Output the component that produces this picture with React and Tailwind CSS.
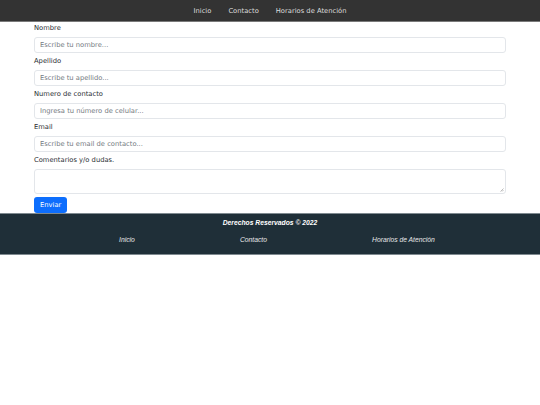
const navLinks = ['Inicio', 'Contacto', 'Horarios de Atención'];

const fields = [
  ['Nombre', 'Escribe tu nombre...'],
  ['Apellido', 'Escribe tu apellido...'],
  ['Numero de contacto', 'Ingresa tu número de celular...'],
  ['Email', 'Escribe tu email de contacto...'],
];

function App() {
  return (
    <div className="min-h-[405px] bg-white font-['DejaVu_Sans',sans-serif] text-[6.75px] text-[#2a2e33]">
      <nav className="flex h-[22px] items-center justify-center gap-[17px] border-b border-[#7a7a7a] bg-[#333333] pt-[2px]">
        {navLinks.map((link) => (
          <a key={link} className="leading-none text-[#dddddd]">{link}</a>
        ))}
      </nav>

      <form className="px-[34px]">
        {fields.map(([label, placeholder]) => (
          <div key={label} className="mb-[2px]">
            <label className="mb-[4px] block h-[11px] pt-[1px] leading-[11px]">{label}</label>
            <input
              className="block h-[16px] w-full rounded-[3px] border border-[#e3e6ea] bg-white px-[5px] text-[6.75px] outline-none placeholder:text-[#757b82]"
              placeholder={placeholder}
            />
          </div>
        ))}
        <div>
          <label className="mb-[4px] block h-[11px] pt-[1px] leading-[11px]">Comentarios y/o dudas.</label>
          <div className="relative mb-[3px]">
            <textarea className="block h-[25px] w-full resize-none rounded-[3px] border border-[#e3e6ea] bg-white px-[5px] text-[6.75px] outline-none" />
            <svg className="absolute bottom-[2px] right-[2px]" width="4" height="4" viewBox="0 0 4 4">
              <path d="M0.5 3.5 L3.5 0.5 M2 3.5 L3.5 2" stroke="#a0a0a0" strokeWidth="0.7" />
            </svg>
          </div>
        </div>
        <button type="button" className="h-[16px] rounded-[3px] bg-[#0d6efd] px-[6px] leading-none text-white">Enviar</button>
      </form>

      <footer className="h-[42px] border-y border-[#7f8a90] bg-[#1f2f38] font-['Liberation_Sans',Arial,sans-serif] text-[6.75px] italic text-white">
        <p className="pt-[5px] text-center font-bold leading-[8px]">Derechos Reservados © 2022</p>
        <ul className="mt-[9px] flex justify-evenly pl-[14px] leading-[8px] text-[#e8e8e8]">
          {navLinks.map((link) => (
            <li key={link}>{link}</li>
          ))}
        </ul>
      </footer>
    </div>
  );
}

export default App;
